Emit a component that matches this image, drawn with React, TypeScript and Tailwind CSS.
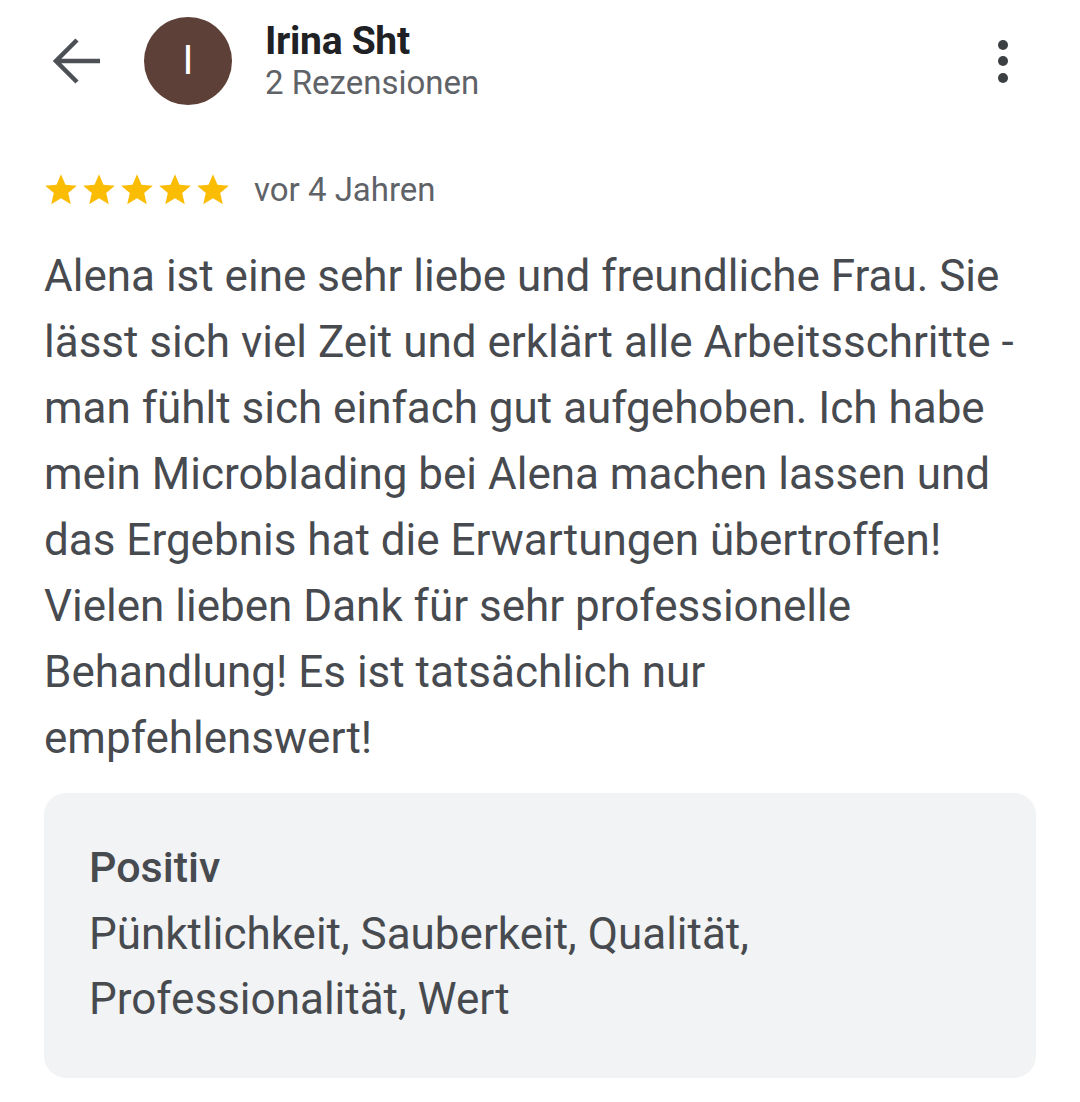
import React from "react";

const Star = () => (
  <svg width="38" height="38" viewBox="0 0 24 24" className="shrink-0">
    <path fill="#fbbc04" d="M12 17.27L18.18 21l-1.64-7.03L22 9.24l-7.19-.61L12 2 9.19 8.63 2 9.24l5.46 4.73L5.82 21z" />
  </svg>
);

export default function App() {
  return (
    <div className="w-[1080px] h-[1102px] bg-white text-[#474a4f]" style={{ fontFamily: "Roboto, 'Noto Sans', sans-serif" }}>
      <div className="flex items-center h-[122px] pl-[53px] pr-[72px]">
        <svg width="50" height="50" viewBox="0 0 50 50" className="shrink-0">
          <path d="M3 25 H47 M24 4 L3 25 L24 46" fill="none" stroke="#4d5156" strokeWidth="4.5" strokeLinecap="butt" strokeLinejoin="miter" />
        </svg>
        <div className="ml-[41px] w-[88px] h-[88px] rounded-full bg-[#5d4037] flex items-center justify-center text-white text-[40px] leading-none shrink-0">
          I
        </div>
        <div className="ml-[33px] flex flex-col">
          <div className="text-[39px] font-bold text-[#202124] leading-[44px] tracking-[-0.3px]">Irina Sht</div>
          <div className="text-[33px] text-[#5f6368] leading-[40px]">2 Rezensionen</div>
        </div>
        <div className="ml-auto flex flex-col gap-[6.5px] items-center">
          <div className="w-[10px] h-[10px] rounded-full bg-[#3c4043]" />
          <div className="w-[10px] h-[10px] rounded-full bg-[#3c4043]" />
          <div className="w-[10px] h-[10px] rounded-full bg-[#3c4043]" />
        </div>
      </div>
      <div className="px-[44px]">
        <div className="flex items-center mt-[48px] h-[40px]">
          <div className="flex -ml-[2px]">
            <Star /><Star /><Star /><Star /><Star />
          </div>
          <div className="ml-[22px] text-[33px] text-[#5f6368]">vor 4 Jahren</div>
        </div>
        <p className="mt-[33px] text-[44px] leading-[66px] text-[#474a4f] w-[992px]">
          Alena ist eine sehr liebe und freundliche Frau. Sie lässt sich viel Zeit und erklärt alle Arbeitsschritte - man fühlt sich einfach gut aufgehoben. Ich habe mein Microblading bei Alena machen lassen und das Ergebnis hat die Erwartungen übertroffen! Vielen lieben Dank für sehr professionelle Behandlung! Es ist tatsächlich nur empfehlenswert!
        </p>
        <div className="mt-[22px] w-[992px] h-[285px] rounded-[22px] bg-[#f1f3f4] px-[45px] pt-[49px]">
          <div className="text-[43px] font-medium leading-[50px] text-[#474a4f]">Positiv</div>
          <div className="text-[44px] leading-[65px] text-[#474a4f] mt-[9.5px]">
            Pünktlichkeit, Sauberkeit, Qualität,<br />Professionalität, Wert
          </div>
        </div>
      </div>
    </div>
  );
}
